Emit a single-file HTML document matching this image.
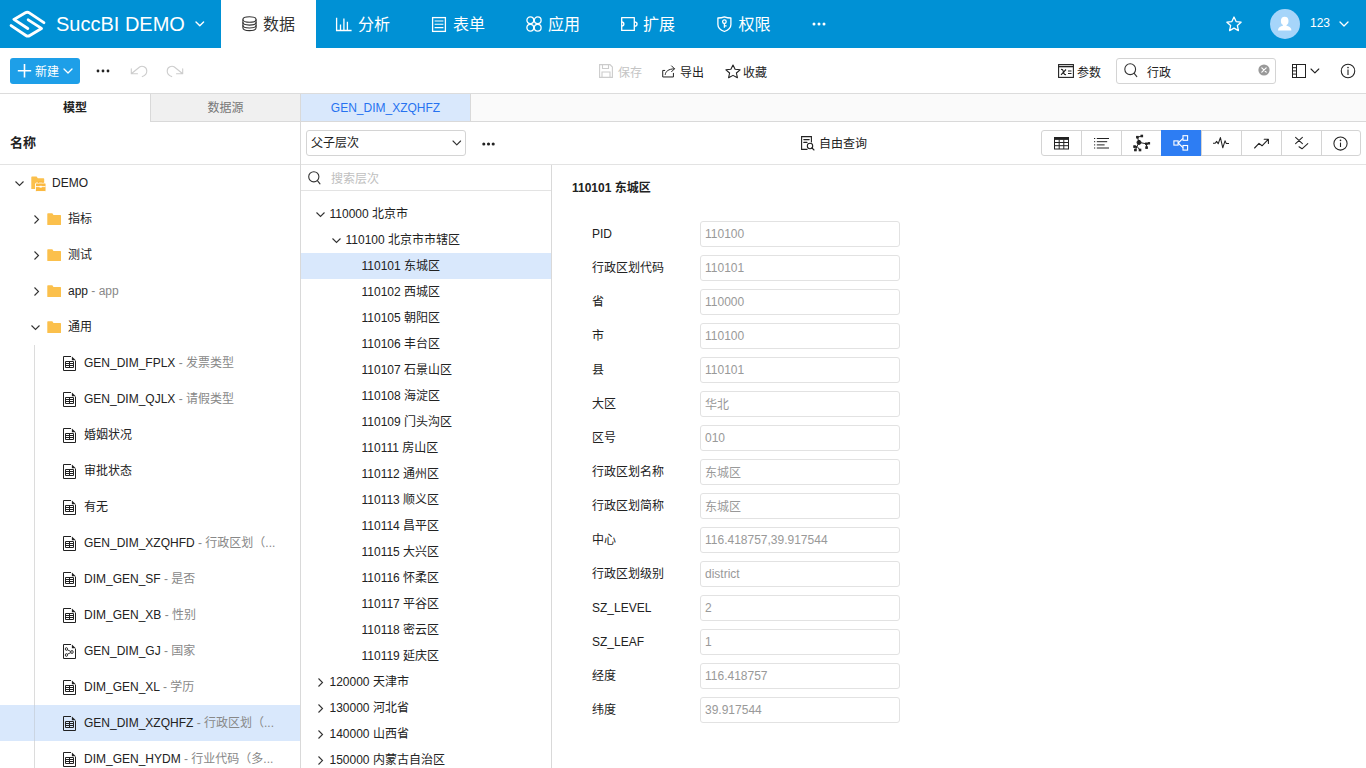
<!DOCTYPE html>
<html lang="zh-CN">
<head>
<meta charset="utf-8">
<title>SuccBI DEMO</title>
<style>
*{box-sizing:border-box;margin:0;padding:0}
html,body{width:1366px;height:768px;overflow:hidden;background:#fff}
body{font-family:"Liberation Sans","Noto Sans CJK SC",sans-serif;font-size:12px;color:#222;position:relative}
.abs{position:absolute}
svg{display:block;overflow:visible}
/* header */
#hdr{position:absolute;left:0;top:0;width:1366px;height:48px;background:#0091d5;color:#fff}
#hdr .title{position:absolute;left:56px;top:0;line-height:48px;font-size:20px;white-space:nowrap}
.nav{position:absolute;top:0;height:48px;line-height:49px;font-size:16px;white-space:nowrap}
.nav svg{position:absolute;top:16px;left:0}
#nav-active{position:absolute;left:221px;top:0;width:95px;height:48px;background:#fff;color:#333}
/* toolbar */
#tb{position:absolute;left:0;top:48px;width:1366px;height:46px;background:#fff;border-bottom:1px solid #dcdcdc}
#newbtn{position:absolute;left:10px;top:10px;width:70px;height:26px;border-radius:3px;background:#1e9fe8;color:#fff}
.tbt{position:absolute;top:2px;line-height:46px;font-size:12px;white-space:nowrap}
/* tabs */
#tabs{position:absolute;left:0;top:94px;width:1366px;height:28px;background:#fafafa;border-bottom:1px solid #d9d9d9}
.tab{position:absolute;top:0;height:28px;line-height:29px;text-align:center;font-size:12px}
/* left */
#left{position:absolute;left:0;top:122px;width:301px;height:646px;border-right:1px solid #d9d9d9;background:#fff;overflow:hidden}
.lrow{position:absolute;left:0;width:300px;height:36px;line-height:36px;white-space:nowrap}
.lrow .t{position:absolute;top:0}
.lrow .d{color:#888}
.lrow svg{position:absolute}
/* middle */
#mid{position:absolute;left:301px;top:122px;width:1065px;height:646px;background:#fff}
#midbar{position:absolute;left:0;top:0;width:1065px;height:43px;border-bottom:1px solid #e3e3e3}
#tree{position:absolute;left:0;top:43px;width:251px;height:603px;border-right:1px solid #d9d9d9;overflow:hidden}
.trow{position:absolute;left:0;width:250px;height:26px;line-height:26px;white-space:nowrap}
.trow span{position:absolute;top:0}
.trow svg{position:absolute;top:9px}
/* form */
.flabel{position:absolute;left:592px;height:28px;line-height:28px;white-space:nowrap;color:#222}
.finput{position:absolute;left:700px;width:200px;height:26px;line-height:24px;border:1px solid #e2e2e2;border-radius:3px;padding-left:4px;color:#999;white-space:nowrap;background:#fff}
</style>
</head>
<body>
<div id="hdr">
<svg class="abs" style="left:0;top:0" width="56" height="48" viewBox="0 0 56 48"><g fill="none" stroke="#fff" stroke-width="2.9" stroke-linecap="round" stroke-linejoin="round"><path d="M27.8 28.5 L13.9 19.4 L25.4 12.8 Q27.4 11.6 29.3 12.9 L43.9 22.6"/><path d="M28.2 19.9 L41.5 28.4 L29.8 35.5 Q27.8 36.8 25.9 35.5 L11.1 25.6"/></g></svg>
<div class="title">SuccBI DEMO</div>
<svg class="abs" style="left:195.6px;top:22.4px" width="7.6" height="3.7" viewBox="0 0 7.6 3.7"><path d="M0 0 L3.8 3.7 L7.6 0" fill="none" stroke="#fff" stroke-width="1.4" stroke-linecap="round" stroke-linejoin="round"/></svg>
<div id="nav-active"></div>
<svg class="abs" style="left:241.5px;top:16.4px" width="15" height="15.4" preserveAspectRatio="none" viewBox="0 0 15 16"><g fill="none" stroke="#333" stroke-width="1.1"><ellipse cx="7.5" cy="3.6" rx="6.6" ry="2.9"/><path d="M0.9 3.6 V12.2 C0.9 13.9 3.9 15.2 7.5 15.2 S14.1 13.9 14.1 12.2 V3.6"/><path d="M0.9 6.6 C0.9 8.3 3.9 9.5 7.5 9.5 S14.1 8.3 14.1 6.6"/><path d="M0.9 9.5 C0.9 11.2 3.9 12.4 7.5 12.4 S14.1 11.2 14.1 9.5"/></g></svg>
<div class="nav" style="left:263px;color:#333">数据</div>
<svg class="abs" style="left:336px;top:16px" width="16" height="16" viewBox="0 0 16 16"><g fill="none" stroke="#fff" stroke-width="1.3"><path d="M0.6 1.8 V14.5 H15.6"/><path d="M4.5 14 V8.5 M7.9 14 V2.5 M11.4 14 V5.8"/></g></svg>
<div class="nav" style="left:358px">分析</div>
<svg class="abs" style="left:432px;top:17px" width="14" height="15" viewBox="0 0 14 15"><g fill="none" stroke="#fff" stroke-width="1.3"><rect x="0.6" y="0.6" width="12.8" height="13.8"/><path d="M2.6 4 H11.4 M2.6 7.3 H11.4 M2.6 10.6 H11.4" stroke-width="1.1"/></g></svg>
<div class="nav" style="left:453px">表单</div>
<svg class="abs" style="left:526px;top:16px" width="16" height="16" viewBox="0 0 16 16"><g fill="none" stroke="#fff" stroke-width="1.3"><circle cx="4.3" cy="4.3" r="3.4"/><circle cx="11.7" cy="4.3" r="3.4"/><circle cx="4.3" cy="11.7" r="3.4"/><circle cx="11.7" cy="11.7" r="3.4"/></g></svg>
<div class="nav" style="left:548px">应用</div>
<svg class="abs" style="left:621px;top:17px" width="18" height="14" viewBox="0 0 18 14"><g fill="none" stroke="#fff" stroke-width="1.3" stroke-linejoin="round"><rect x="0.7" y="0.6" width="12.6" height="12.8"/><path d="M0.7 5 C3.6 5 3.6 9 0.7 9"/><path d="M13.3 4.8 C17 4.8 17 9.2 13.3 9.2"/></g></svg>
<div class="nav" style="left:643px">扩展</div>
<svg class="abs" style="left:717px;top:16px" width="15" height="16" viewBox="0 0 15 16"><g fill="none" stroke="#fff" stroke-width="1.3" stroke-linejoin="round"><path d="M7.4 0.8 C5.5 1.6 3 2 0.9 2 V8.4 C0.9 11.8 4 14.2 7.4 15.5 C10.8 14.2 13.9 11.8 13.9 8.4 V2 C11.8 2 9.3 1.6 7.4 0.8 Z"/><circle cx="7.4" cy="5.7" r="1.8"/><path d="M7.4 7.5 V11.8 M7.4 9.8 H9.6"/></g></svg>
<div class="nav" style="left:738.5px">权限</div>
<svg class="abs" style="left:812px;top:22px" width="14" height="4" viewBox="0 0 14 4"><g fill="#fff"><circle cx="2" cy="2" r="1.5"/><circle cx="7" cy="2" r="1.5"/><circle cx="12" cy="2" r="1.5"/></g></svg>
<svg class="abs" style="left:1226px;top:16px" width="16" height="16" viewBox="0 0 16 16"><path d="M8 1 L10.1 5.6 L15.1 6.2 L11.4 9.6 L12.4 14.6 L8 12.1 L3.6 14.6 L4.6 9.6 L0.9 6.2 L5.9 5.6 Z" fill="none" stroke="#fff" stroke-width="1.3" stroke-linejoin="round"/></svg>
<svg class="abs" style="left:1270px;top:9px" width="30" height="30" viewBox="0 0 30 30"><circle cx="15" cy="15" r="15" fill="#a6d5fa"/><ellipse cx="14.7" cy="12" rx="3.8" ry="4.3" fill="#fff"/><rect x="12.9" y="14" width="3.6" height="4" fill="#fff"/><path d="M8 21.6 C8 18.4 10.5 17.2 14.7 16.6 C18.9 17.2 21.4 18.4 21.4 21.6 Z" fill="#fff"/></svg>
<div class="abs" style="left:1310px;top:0;line-height:46px;font-size:12px;color:#fff">123</div>
<svg class="abs" style="left:1340px;top:22px" width="8" height="4" viewBox="0 0 8 4"><path d="M0 0 L4.0 4 L8 0" fill="none" stroke="#fff" stroke-width="1.3" stroke-linecap="round" stroke-linejoin="round"/></svg>
</div>
<div id="tb">
<div id="newbtn"><svg class="abs" style="left:8px;top:6px" width="13" height="13" viewBox="0 0 13 13"><path d="M6.5 0 V13.5 M-0.2 6.7 H13.2" stroke="#fff" stroke-width="1.6" fill="none"/></svg><span class="abs" style="left:25px;top:0;line-height:28px;font-size:12px">新建</span><svg class="abs" style="left:54px;top:11px" width="8" height="4" viewBox="0 0 8 4"><path d="M0 0 L4.0 4 L8 0" fill="none" stroke="#fff" stroke-width="1.3" stroke-linecap="round" stroke-linejoin="round"/></svg></div>
<svg class="abs" style="left:95.5px;top:21px" width="14" height="4" viewBox="0 0 14 4"><g fill="#222"><circle cx="2" cy="2" r="1.4"/><circle cx="7" cy="2" r="1.4"/><circle cx="12" cy="2" r="1.4"/></g></svg>
<svg class="abs" style="left:130px;top:17px" width="18" height="13" viewBox="0 0 18 13"><path d="M1.3 3.7 V8.7 H7.5 M1.3 8.7 L9.6 2 C12 0.3 16.8 1.5 16.8 6 C16.8 9 14.5 10.8 12.3 11.6" fill="none" stroke="#cdcdcd" stroke-width="1.1" stroke-linecap="round" stroke-linejoin="round"/></svg>
<svg class="abs" style="left:166px;top:17px" width="18" height="13" viewBox="0 0 18 13"><path d="M16.7 3.7 V8.7 H10.5 M16.7 8.7 L8.4 2 C6 0.3 1.2 1.5 1.2 6 C1.2 9 3.5 10.8 5.7 11.6" fill="none" stroke="#cdcdcd" stroke-width="1.1" stroke-linecap="round" stroke-linejoin="round"/></svg>
<svg class="abs" style="left:599px;top:16px" width="14" height="14" viewBox="0 0 14 14"><g fill="none" stroke="#ccc" stroke-width="1.1"><path d="M0.6 0.6 H11 L13.4 3 V13.4 H0.6 Z"/><path d="M3.5 0.6 V4.5 H9.5 V0.6"/><path d="M3 13.4 V8 H11 V13.4"/></g></svg>
<div class="tbt" style="left:618px;color:#c4c4c4">保存</div>
<svg class="abs" style="left:662px;top:16.6px" width="13.6" height="12.7" viewBox="0 0 15 14"><g fill="none" stroke="#222" stroke-width="1.1" stroke-linejoin="round" stroke-linecap="round"><path d="M3 6 H0.8 V13.2 H12.6 V9.2"/><path d="M3.6 10.4 C4 7 7 4.4 13.5 4.2 M10.6 1 L13.8 4.2 L10.6 7.4"/></g></svg>
<div class="tbt" style="left:680px">导出</div>
<svg class="abs" style="left:724.5px;top:16px" width="16" height="15" preserveAspectRatio="none" viewBox="0 0 16 16"><path d="M8 1 L10.1 5.6 L15.1 6.2 L11.4 9.6 L12.4 14.6 L8 12.1 L3.6 14.6 L4.6 9.6 L0.9 6.2 L5.9 5.6 Z" fill="none" stroke="#222" stroke-width="1.1" stroke-linejoin="round"/></svg>
<div class="tbt" style="left:743px">收藏</div>
<svg class="abs" style="left:1058px;top:16px" width="16" height="14" viewBox="0 0 16 14"><g fill="none" stroke="#222" stroke-width="1.1"><rect x="0.6" y="0.6" width="14.8" height="12.8"/><path d="M0.6 2.6 H15.4" stroke-width="1.4"/><path d="M3 5.5 C4.5 5 5 6 5.5 8 S6.5 11 8 10.5 M8 5.5 L3 10.8"/><path d="M10 7 H13.5 M10 9.5 H13.5"/></g></svg>
<div class="tbt" style="left:1077px">参数</div>
<div class="abs" style="left:1116px;top:10px;width:160px;height:26px;border:1px solid #d4d4d4;border-radius:3px;background:#fff"></div>
<svg class="abs" style="left:1124px;top:15px" width="14" height="15" viewBox="0 0 14 15"><g fill="none" stroke="#333" stroke-width="1.1" stroke-linecap="round"><circle cx="6.2" cy="6.2" r="5.4"/><path d="M10.2 10.4 L12.8 13.6"/></g></svg>
<div class="tbt" style="left:1147px">行政</div>
<svg class="abs" style="left:1258px;top:16px" width="12" height="12" viewBox="0 0 12 12"><circle cx="6" cy="6" r="5.6" fill="#999"/><path d="M3.8 3.8 L8.2 8.2 M8.2 3.8 L3.8 8.2" stroke="#fff" stroke-width="1.2" stroke-linecap="round"/></svg>
<svg class="abs" style="left:1292px;top:16px" width="15" height="14" viewBox="0 0 15 14"><g fill="none" stroke="#222" stroke-width="1"><rect x="0.5" y="0.5" width="13" height="13"/><path d="M4.5 0.5 V13.5 M0.5 3.7 H4.5 M0.5 6.9 H4.5 M0.5 10.1 H4.5"/></g></svg>
<svg class="abs" style="left:1311.2px;top:21.3px" width="7.8" height="3.9" viewBox="0 0 7.8 3.9"><path d="M0 0 L3.9 3.9 L7.8 0" fill="none" stroke="#222" stroke-width="1.1" stroke-linecap="round" stroke-linejoin="round"/></svg>
<svg class="abs" style="left:1339.6px;top:15px" width="16" height="16" viewBox="0 0 16 16"><g fill="none" stroke="#222" stroke-width="1.05"><circle cx="8" cy="8" r="6.75"/><path d="M8 6.5 V11.9" stroke-width="1.1"/></g><circle cx="8" cy="4.6" r="0.8" fill="#222"/></svg>
</div>
<div id="tabs">
<div class="tab" style="left:0;width:150px;background:#fff;font-weight:bold;color:#222;height:28px">模型</div>
<div class="tab" style="left:150px;width:151px;background:#f0f0f0;color:#777;border-left:1px solid #d9d9d9;border-right:1px solid #d9d9d9;border-bottom:1px solid #d9d9d9">数据源</div>
<div class="tab" style="left:301px;width:170px;background:#d9e8fc;color:#2672f0;border-right:1px solid #d9d9d9;height:27px">GEN_DIM_XZQHFZ</div>
</div>
<div id="left">
<div class="abs" style="left:0;top:0;width:300px;height:43px;border-bottom:1px solid #e3e3e3"></div>
<div class="abs" style="left:10px;top:0;line-height:41px;font-weight:bold;font-size:13px;color:#222">名称</div>
<div class="abs" style="left:34px;top:223px;width:1px;height:430px;background:#dcdcdc"></div>
<div class="lrow" style="top:43px"><svg style="left:15px;top:16px" width="9" height="5" viewBox="0 0 9 5"><path d="M0.5 0.5 L4.5 4.5 L8.5 0.5" fill="none" stroke="#333" stroke-width="1.1"/></svg><svg style="left:31px;top:11px" width="16" height="16" viewBox="0 0 16 16"><path d="M0.3 1.2 Q0.3 0.5 1 0.5 H5.6 L6.8 2.2 H12.5 Q13.2 2.2 13.2 2.9 V13 H0.3 Z" fill="#fbc04c"/><rect x="4.5" y="7" width="10.5" height="8.5" rx="1" fill="#fbb941" stroke="#fff" stroke-width="0.9"/><path d="M7.5 7 V5.6 H12 V7" fill="none" stroke="#fbb941" stroke-width="1.2"/><path d="M5 10.6 H14.5" stroke="#fff" stroke-width="0.9"/><rect x="8.6" y="9.8" width="2.2" height="1.8" fill="#fff"/></svg><span class="t" style="left:52px">DEMO</span></div>
<div class="lrow" style="top:79px"><svg style="left:34px;top:14px" width="5" height="9" viewBox="0 0 5 9"><path d="M0.5 0.5 L4.5 4.5 L0.5 8.5" fill="none" stroke="#333" stroke-width="1.1"/></svg><svg style="left:47px;top:12px" width="14.3" height="12.4" viewBox="0 0 15 13"><path d="M0.3 1 Q0.3 0.3 1 0.3 H5.6 L6.8 2 H14 Q14.7 2 14.7 2.7 V12 Q14.7 12.7 14 12.7 H1 Q0.3 12.7 0.3 12 Z" fill="#fbc04c"/></svg><span class="t" style="left:68px">指标</span></div>
<div class="lrow" style="top:115px"><svg style="left:34px;top:14px" width="5" height="9" viewBox="0 0 5 9"><path d="M0.5 0.5 L4.5 4.5 L0.5 8.5" fill="none" stroke="#333" stroke-width="1.1"/></svg><svg style="left:47px;top:12px" width="14.3" height="12.4" viewBox="0 0 15 13"><path d="M0.3 1 Q0.3 0.3 1 0.3 H5.6 L6.8 2 H14 Q14.7 2 14.7 2.7 V12 Q14.7 12.7 14 12.7 H1 Q0.3 12.7 0.3 12 Z" fill="#fbc04c"/></svg><span class="t" style="left:68px">测试</span></div>
<div class="lrow" style="top:151px"><svg style="left:34px;top:14px" width="5" height="9" viewBox="0 0 5 9"><path d="M0.5 0.5 L4.5 4.5 L0.5 8.5" fill="none" stroke="#333" stroke-width="1.1"/></svg><svg style="left:47px;top:12px" width="14.3" height="12.4" viewBox="0 0 15 13"><path d="M0.3 1 Q0.3 0.3 1 0.3 H5.6 L6.8 2 H14 Q14.7 2 14.7 2.7 V12 Q14.7 12.7 14 12.7 H1 Q0.3 12.7 0.3 12 Z" fill="#fbc04c"/></svg><span class="t" style="left:68px">app<span class="d"> - app</span></span></div>
<div class="lrow" style="top:187px"><svg style="left:31px;top:16px" width="9" height="5" viewBox="0 0 9 5"><path d="M0.5 0.5 L4.5 4.5 L8.5 0.5" fill="none" stroke="#333" stroke-width="1.1"/></svg><svg style="left:47px;top:12px" width="14.3" height="12.4" viewBox="0 0 15 13"><path d="M0.3 1 Q0.3 0.3 1 0.3 H5.6 L6.8 2 H14 Q14.7 2 14.7 2.7 V12 Q14.7 12.7 14 12.7 H1 Q0.3 12.7 0.3 12 Z" fill="#fbc04c"/></svg><span class="t" style="left:68px">通用</span></div>
<div class="lrow" style="top:223px"><svg style="left:63px;top:11px" width="13" height="15" viewBox="0 0 13 15"><path d="M8 0.5 H0.5 V14.5 H12.5 V4.6" fill="none" stroke="#222" stroke-width="1"/><path d="M8.9 0.4 L12.8 4.3 H8.9 Z" fill="#222"/><path d="M2.5 5.5 H10.5 V11.5 H2.5 Z M2.5 7.5 H10.5 M2.5 9.5 H10.5 M6.5 5.5 V11.5" fill="none" stroke="#222" stroke-width="1"/></svg><span class="t" style="left:84px">GEN_DIM_FPLX<span class="d"> - 发票类型</span></span></div>
<div class="lrow" style="top:259px"><svg style="left:63px;top:11px" width="13" height="15" viewBox="0 0 13 15"><path d="M8 0.5 H0.5 V14.5 H12.5 V4.6" fill="none" stroke="#222" stroke-width="1"/><path d="M8.9 0.4 L12.8 4.3 H8.9 Z" fill="#222"/><path d="M2.5 5.5 H10.5 V11.5 H2.5 Z M2.5 7.5 H10.5 M2.5 9.5 H10.5 M6.5 5.5 V11.5" fill="none" stroke="#222" stroke-width="1"/></svg><span class="t" style="left:84px">GEN_DIM_QJLX<span class="d"> - 请假类型</span></span></div>
<div class="lrow" style="top:295px"><svg style="left:63px;top:11px" width="13" height="15" viewBox="0 0 13 15"><path d="M8 0.5 H0.5 V14.5 H12.5 V4.6" fill="none" stroke="#222" stroke-width="1"/><path d="M8.9 0.4 L12.8 4.3 H8.9 Z" fill="#222"/><path d="M2.5 5.5 H10.5 V11.5 H2.5 Z M2.5 7.5 H10.5 M2.5 9.5 H10.5 M6.5 5.5 V11.5" fill="none" stroke="#222" stroke-width="1"/></svg><span class="t" style="left:84px">婚姻状况</span></div>
<div class="lrow" style="top:331px"><svg style="left:63px;top:11px" width="13" height="15" viewBox="0 0 13 15"><path d="M8 0.5 H0.5 V14.5 H12.5 V4.6" fill="none" stroke="#222" stroke-width="1"/><path d="M8.9 0.4 L12.8 4.3 H8.9 Z" fill="#222"/><path d="M2.5 5.5 H10.5 V11.5 H2.5 Z M2.5 7.5 H10.5 M2.5 9.5 H10.5 M6.5 5.5 V11.5" fill="none" stroke="#222" stroke-width="1"/></svg><span class="t" style="left:84px">审批状态</span></div>
<div class="lrow" style="top:367px"><svg style="left:63px;top:11px" width="13" height="15" viewBox="0 0 13 15"><path d="M8 0.5 H0.5 V14.5 H12.5 V4.6" fill="none" stroke="#222" stroke-width="1"/><path d="M8.9 0.4 L12.8 4.3 H8.9 Z" fill="#222"/><path d="M2.5 5.5 H10.5 V11.5 H2.5 Z M2.5 7.5 H10.5 M2.5 9.5 H10.5 M6.5 5.5 V11.5" fill="none" stroke="#222" stroke-width="1"/></svg><span class="t" style="left:84px">有无</span></div>
<div class="lrow" style="top:403px"><svg style="left:63px;top:11px" width="13" height="15" viewBox="0 0 13 15"><path d="M8 0.5 H0.5 V14.5 H12.5 V4.6" fill="none" stroke="#222" stroke-width="1"/><path d="M8.9 0.4 L12.8 4.3 H8.9 Z" fill="#222"/><path d="M2.5 5.5 H10.5 V11.5 H2.5 Z M2.5 7.5 H10.5 M2.5 9.5 H10.5 M6.5 5.5 V11.5" fill="none" stroke="#222" stroke-width="1"/></svg><span class="t" style="left:84px">GEN_DIM_XZQHFD<span class="d"> - 行政区划（...</span></span></div>
<div class="lrow" style="top:439px"><svg style="left:63px;top:11px" width="13" height="15" viewBox="0 0 13 15"><path d="M8 0.5 H0.5 V14.5 H12.5 V4.6" fill="none" stroke="#222" stroke-width="1"/><path d="M8.9 0.4 L12.8 4.3 H8.9 Z" fill="#222"/><path d="M2.5 5.5 H10.5 V11.5 H2.5 Z M2.5 7.5 H10.5 M2.5 9.5 H10.5 M6.5 5.5 V11.5" fill="none" stroke="#222" stroke-width="1"/></svg><span class="t" style="left:84px">DIM_GEN_SF<span class="d"> - 是否</span></span></div>
<div class="lrow" style="top:475px"><svg style="left:63px;top:11px" width="13" height="15" viewBox="0 0 13 15"><path d="M8 0.5 H0.5 V14.5 H12.5 V4.6" fill="none" stroke="#222" stroke-width="1"/><path d="M8.9 0.4 L12.8 4.3 H8.9 Z" fill="#222"/><path d="M2.5 5.5 H10.5 V11.5 H2.5 Z M2.5 7.5 H10.5 M2.5 9.5 H10.5 M6.5 5.5 V11.5" fill="none" stroke="#222" stroke-width="1"/></svg><span class="t" style="left:84px">DIM_GEN_XB<span class="d"> - 性别</span></span></div>
<div class="lrow" style="top:511px"><svg style="left:63px;top:11px" width="13" height="15" viewBox="0 0 13 15"><path d="M8 0.5 H0.5 V14.5 H12.5 V4.6" fill="none" stroke="#222" stroke-width="1"/><path d="M8.9 0.4 L12.8 4.3 H8.9 Z" fill="#222"/><g fill="none" stroke="#222" stroke-width="0.9"><ellipse cx="3.4" cy="5" rx="1.1" ry="1.4"/><ellipse cx="3.4" cy="11" rx="1.1" ry="1.4"/><ellipse cx="9" cy="8" rx="1.2" ry="1.5"/><path d="M4.4 5.8 L7.9 7.5 M4.4 10.2 L7.9 8.6"/></g></svg><span class="t" style="left:84px">GEN_DIM_GJ<span class="d"> - 国家</span></span></div>
<div class="lrow" style="top:547px"><svg style="left:63px;top:11px" width="13" height="15" viewBox="0 0 13 15"><path d="M8 0.5 H0.5 V14.5 H12.5 V4.6" fill="none" stroke="#222" stroke-width="1"/><path d="M8.9 0.4 L12.8 4.3 H8.9 Z" fill="#222"/><path d="M2.5 5.5 H10.5 V11.5 H2.5 Z M2.5 7.5 H10.5 M2.5 9.5 H10.5 M6.5 5.5 V11.5" fill="none" stroke="#222" stroke-width="1"/></svg><span class="t" style="left:84px">DIM_GEN_XL<span class="d"> - 学历</span></span></div>
<div class="lrow" style="top:583px;background:#d9e8fc"><div class="abs" style="left:34px;top:0;width:1px;height:36px;background:#cbd5e2"></div><svg style="left:63px;top:11px" width="13" height="15" viewBox="0 0 13 15"><path d="M8 0.5 H0.5 V14.5 H12.5 V4.6" fill="none" stroke="#222" stroke-width="1"/><path d="M8.9 0.4 L12.8 4.3 H8.9 Z" fill="#222"/><path d="M2.5 5.5 H10.5 V11.5 H2.5 Z M2.5 7.5 H10.5 M2.5 9.5 H10.5 M6.5 5.5 V11.5" fill="none" stroke="#222" stroke-width="1"/></svg><span class="t" style="left:84px">GEN_DIM_XZQHFZ<span class="d"> - 行政区划（...</span></span></div>
<div class="lrow" style="top:619px"><svg style="left:63px;top:11px" width="13" height="15" viewBox="0 0 13 15"><path d="M8 0.5 H0.5 V14.5 H12.5 V4.6" fill="none" stroke="#222" stroke-width="1"/><path d="M8.9 0.4 L12.8 4.3 H8.9 Z" fill="#222"/><path d="M2.5 5.5 H10.5 V11.5 H2.5 Z M2.5 7.5 H10.5 M2.5 9.5 H10.5 M6.5 5.5 V11.5" fill="none" stroke="#222" stroke-width="1"/></svg><span class="t" style="left:84px">DIM_GEN_HYDM<span class="d"> - 行业代码（多...</span></span></div>
</div>
<div id="mid">
<div id="midbar">
<div class="abs" style="left:5px;top:8px;width:160px;height:26px;border:1px solid #d4d4d4;border-radius:3px"></div>
<div class="abs" style="left:10px;top:8px;line-height:27px">父子层次</div>
<svg class="abs" style="left:152px;top:19.3px" width="7.6" height="3.8" viewBox="0 0 7.6 3.8"><path d="M0 0 L3.8 3.8 L7.6 0" fill="none" stroke="#333" stroke-width="1.1" stroke-linecap="round" stroke-linejoin="round"/></svg>
<svg class="abs" style="left:181px;top:20px" width="13" height="4" viewBox="0 0 13 4"><g fill="#222"><circle cx="1.8" cy="2" r="1.55"/><circle cx="6.5" cy="2" r="1.55"/><circle cx="11.2" cy="2" r="1.55"/></g></svg>
<svg class="abs" style="left:500px;top:14px" width="14" height="15" viewBox="0 0 14 15"><g fill="none" stroke="#222" stroke-width="1.1" stroke-linecap="round"><path d="M6 13.4 H0.6 V0.6 H10.4 V6"/><path d="M2.8 3.6 H8.2 M2.8 6.4 H6"/><circle cx="9" cy="10" r="2.7"/><path d="M11 12 L13 14"/></g></svg>
<div class="abs" style="left:518px;top:8px;line-height:28px">自由查询</div>
<div class="abs" style="left:740px;top:8px;width:320px;height:26px;border:1px solid #d4d4d4;border-radius:3px;overflow:hidden"><div class="abs" style="left:39px;top:0;width:1px;height:24px;background:#d4d4d4"></div><div class="abs" style="left:79px;top:0;width:1px;height:24px;background:#d4d4d4"></div><div class="abs" style="left:119px;top:0;width:1px;height:24px;background:#d4d4d4"></div><div class="abs" style="left:159px;top:0;width:1px;height:24px;background:#d4d4d4"></div><div class="abs" style="left:199px;top:0;width:1px;height:24px;background:#d4d4d4"></div><div class="abs" style="left:239px;top:0;width:1px;height:24px;background:#d4d4d4"></div><div class="abs" style="left:279px;top:0;width:1px;height:24px;background:#d4d4d4"></div></div>
<div class="abs" style="left:860px;top:8px;width:40px;height:26px;background:#2d7df3"></div>
<svg class="abs" style="left:753px;top:15px" width="15" height="13" viewBox="0 0 15 13"><g fill="none" stroke="#222" stroke-width="1"><rect x="0.5" y="0.5" width="14" height="11.5"/><path d="M0.5 1.7 H14.5" stroke-width="2.4"/><path d="M0.5 5.5 H14.5 M0.5 8.7 H14.5 M5.2 2.5 V12 M9.8 2.5 V12"/></g></svg>
<svg class="abs" style="left:793px;top:15px" width="15" height="12" viewBox="0 0 15 12"><g fill="none" stroke="#222" stroke-width="1"><path d="M2.8 1.5 H15 M2.8 4.7 H13.2 M2.8 7.9 H10.6 M2.8 11 H15"/><path d="M0 1.5 H1.2 M0 4.7 H1.2 M0 7.9 H1.2 M0 11 H1.2"/></g></svg>
<svg class="abs" style="left:832px;top:13px" width="17" height="16" viewBox="0 0 17 16"><g fill="#222" stroke="#222" stroke-width="1"><circle cx="6" cy="7.4" r="2"/><path d="M6 7.4 L4.4 2.2 L8.8 1 M6 7.4 L13.4 8.8 L16 8.4 M13.4 8.8 L13.6 12.6 M6 7.4 L4 11.4 L1.6 11.6 M4 11.4 L2.4 15 M4 11.4 L7 15" fill="none"/><rect x="3.6" y="1.4" width="1.6" height="1.6"/><rect x="8" y="0.2" width="1.6" height="1.6"/><rect x="12.6" y="8" width="1.6" height="1.6"/><rect x="15.2" y="7.6" width="1.4" height="1.4"/><rect x="12.8" y="11.8" width="1.6" height="1.6"/><rect x="0.8" y="10.8" width="1.6" height="1.6"/><rect x="1.6" y="14.2" width="1.6" height="1.6"/><rect x="6.2" y="14.2" width="1.6" height="1.6"/></g></svg>
<svg class="abs" style="left:872px;top:13px" width="16" height="16" viewBox="0 0 16 16"><g fill="none" stroke="#fff" stroke-width="1.1"><rect x="0.9" y="5.9" width="4.2" height="4.2"/><rect x="10" y="0.7" width="4.6" height="4.6"/><rect x="10" y="10.5" width="4.6" height="4.6"/><path d="M5.1 8 L10 3.4 M5.1 8 L10 12.6"/></g></svg>
<svg class="abs" style="left:912px;top:15px" width="16" height="12" viewBox="0 0 16 12"><path d="M0 6.2 H2.2 L3.6 4.4 L5.2 6.8 L7.4 0.6 L9.8 10.8 L12 3.8 L13.2 6.4 H16" fill="none" stroke="#222" stroke-width="1.05" stroke-linejoin="round"/></svg>
<svg class="abs" style="left:953px;top:15.5px" width="15" height="11" viewBox="0 0 15 11"><path d="M0.6 10 L5 5.4 L8 7.8 L14 1.6 M10.2 1.2 H14.4 V5.4" fill="none" stroke="#222" stroke-width="1.1" stroke-linejoin="round" stroke-linecap="round"/></svg>
<svg class="abs" style="left:994px;top:15px" width="14" height="13" viewBox="0 0 14 13"><path d="M0.6 0.4 L7.4 6.6 M7.4 0.4 L0.6 6.6 M4 9.8 L7 11.8 L12.8 6.6" fill="none" stroke="#222" stroke-width="1.05" stroke-linejoin="round" stroke-linecap="round"/></svg>
<svg class="abs" style="left:1032px;top:13.5px" width="15" height="15" viewBox="0 0 15 15"><g fill="none" stroke="#222" stroke-width="1.05"><circle cx="7.5" cy="7.5" r="6.6"/><path d="M7.5 6.6 V11" stroke-width="1.1"/></g><circle cx="7.5" cy="4.4" r="0.8" fill="#222"/></svg>
</div>
<div id="tree">
<div class="abs" style="left:0;top:0;width:250px;height:26px;border-bottom:1px solid #e3e3e3"></div>
<svg class="abs" style="left:7px;top:6px" width="13" height="14" viewBox="0 0 13 14"><g fill="none" stroke="#333" stroke-width="1.1" stroke-linecap="round"><circle cx="5.8" cy="5.8" r="5.1"/><path d="M9.6 9.8 L12 12.8"/></g></svg>
<div class="abs" style="left:30px;top:0;line-height:28px;color:#c0c0c0">搜索层次</div>
<div class="trow" style="top:36px"><svg style="left:15px;top:11px" width="9" height="5" viewBox="0 0 9 5"><path d="M0.5 0.5 L4.5 4.5 L8.5 0.5" fill="none" stroke="#333" stroke-width="1.1"/></svg><span style="left:28.5px">110000 北京市</span></div>
<div class="trow" style="top:62px"><svg style="left:31px;top:11px" width="9" height="5" viewBox="0 0 9 5"><path d="M0.5 0.5 L4.5 4.5 L8.5 0.5" fill="none" stroke="#333" stroke-width="1.1"/></svg><span style="left:44.5px">110100 北京市市辖区</span></div>
<div class="trow" style="top:88px;background:#d9e8fc"><span style="left:60.5px">110101 东城区</span></div>
<div class="trow" style="top:114px"><span style="left:60.5px">110102 西城区</span></div>
<div class="trow" style="top:140px"><span style="left:60.5px">110105 朝阳区</span></div>
<div class="trow" style="top:166px"><span style="left:60.5px">110106 丰台区</span></div>
<div class="trow" style="top:192px"><span style="left:60.5px">110107 石景山区</span></div>
<div class="trow" style="top:218px"><span style="left:60.5px">110108 海淀区</span></div>
<div class="trow" style="top:244px"><span style="left:60.5px">110109 门头沟区</span></div>
<div class="trow" style="top:270px"><span style="left:60.5px">110111 房山区</span></div>
<div class="trow" style="top:296px"><span style="left:60.5px">110112 通州区</span></div>
<div class="trow" style="top:322px"><span style="left:60.5px">110113 顺义区</span></div>
<div class="trow" style="top:348px"><span style="left:60.5px">110114 昌平区</span></div>
<div class="trow" style="top:374px"><span style="left:60.5px">110115 大兴区</span></div>
<div class="trow" style="top:400px"><span style="left:60.5px">110116 怀柔区</span></div>
<div class="trow" style="top:426px"><span style="left:60.5px">110117 平谷区</span></div>
<div class="trow" style="top:452px"><span style="left:60.5px">110118 密云区</span></div>
<div class="trow" style="top:478px"><span style="left:60.5px">110119 延庆区</span></div>
<div class="trow" style="top:504px"><svg style="left:17px;top:9px" width="5" height="9" viewBox="0 0 5 9"><path d="M0.5 0.5 L4.5 4.5 L0.5 8.5" fill="none" stroke="#333" stroke-width="1.1"/></svg><span style="left:28.5px">120000 天津市</span></div>
<div class="trow" style="top:530px"><svg style="left:17px;top:9px" width="5" height="9" viewBox="0 0 5 9"><path d="M0.5 0.5 L4.5 4.5 L0.5 8.5" fill="none" stroke="#333" stroke-width="1.1"/></svg><span style="left:28.5px">130000 河北省</span></div>
<div class="trow" style="top:556px"><svg style="left:17px;top:9px" width="5" height="9" viewBox="0 0 5 9"><path d="M0.5 0.5 L4.5 4.5 L0.5 8.5" fill="none" stroke="#333" stroke-width="1.1"/></svg><span style="left:28.5px">140000 山西省</span></div>
<div class="trow" style="top:582px"><svg style="left:17px;top:9px" width="5" height="9" viewBox="0 0 5 9"><path d="M0.5 0.5 L4.5 4.5 L0.5 8.5" fill="none" stroke="#333" stroke-width="1.1"/></svg><span style="left:28.5px">150000 内蒙古自治区</span></div>
</div>
</div>
<div id="form">
<div class="abs" style="left:572px;top:174px;line-height:28px;font-weight:bold;color:#222">110101 东城区</div>
<div class="flabel" style="top:220px">PID</div><div class="finput" style="top:221px">110100</div>
<div class="flabel" style="top:254px">行政区划代码</div><div class="finput" style="top:255px">110101</div>
<div class="flabel" style="top:288px">省</div><div class="finput" style="top:289px">110000</div>
<div class="flabel" style="top:322px">市</div><div class="finput" style="top:323px">110100</div>
<div class="flabel" style="top:356px">县</div><div class="finput" style="top:357px">110101</div>
<div class="flabel" style="top:390px">大区</div><div class="finput" style="top:391px;line-height:26px">华北</div>
<div class="flabel" style="top:424px">区号</div><div class="finput" style="top:425px">010</div>
<div class="flabel" style="top:458px">行政区划名称</div><div class="finput" style="top:459px;line-height:26px">东城区</div>
<div class="flabel" style="top:492px">行政区划简称</div><div class="finput" style="top:493px;line-height:26px">东城区</div>
<div class="flabel" style="top:526px">中心</div><div class="finput" style="top:527px">116.418757,39.917544</div>
<div class="flabel" style="top:560px">行政区划级别</div><div class="finput" style="top:561px">district</div>
<div class="flabel" style="top:594px">SZ_LEVEL</div><div class="finput" style="top:595px">2</div>
<div class="flabel" style="top:628px">SZ_LEAF</div><div class="finput" style="top:629px">1</div>
<div class="flabel" style="top:662px">经度</div><div class="finput" style="top:663px">116.418757</div>
<div class="flabel" style="top:696px">纬度</div><div class="finput" style="top:697px">39.917544</div>
</div>
</body>
</html>
